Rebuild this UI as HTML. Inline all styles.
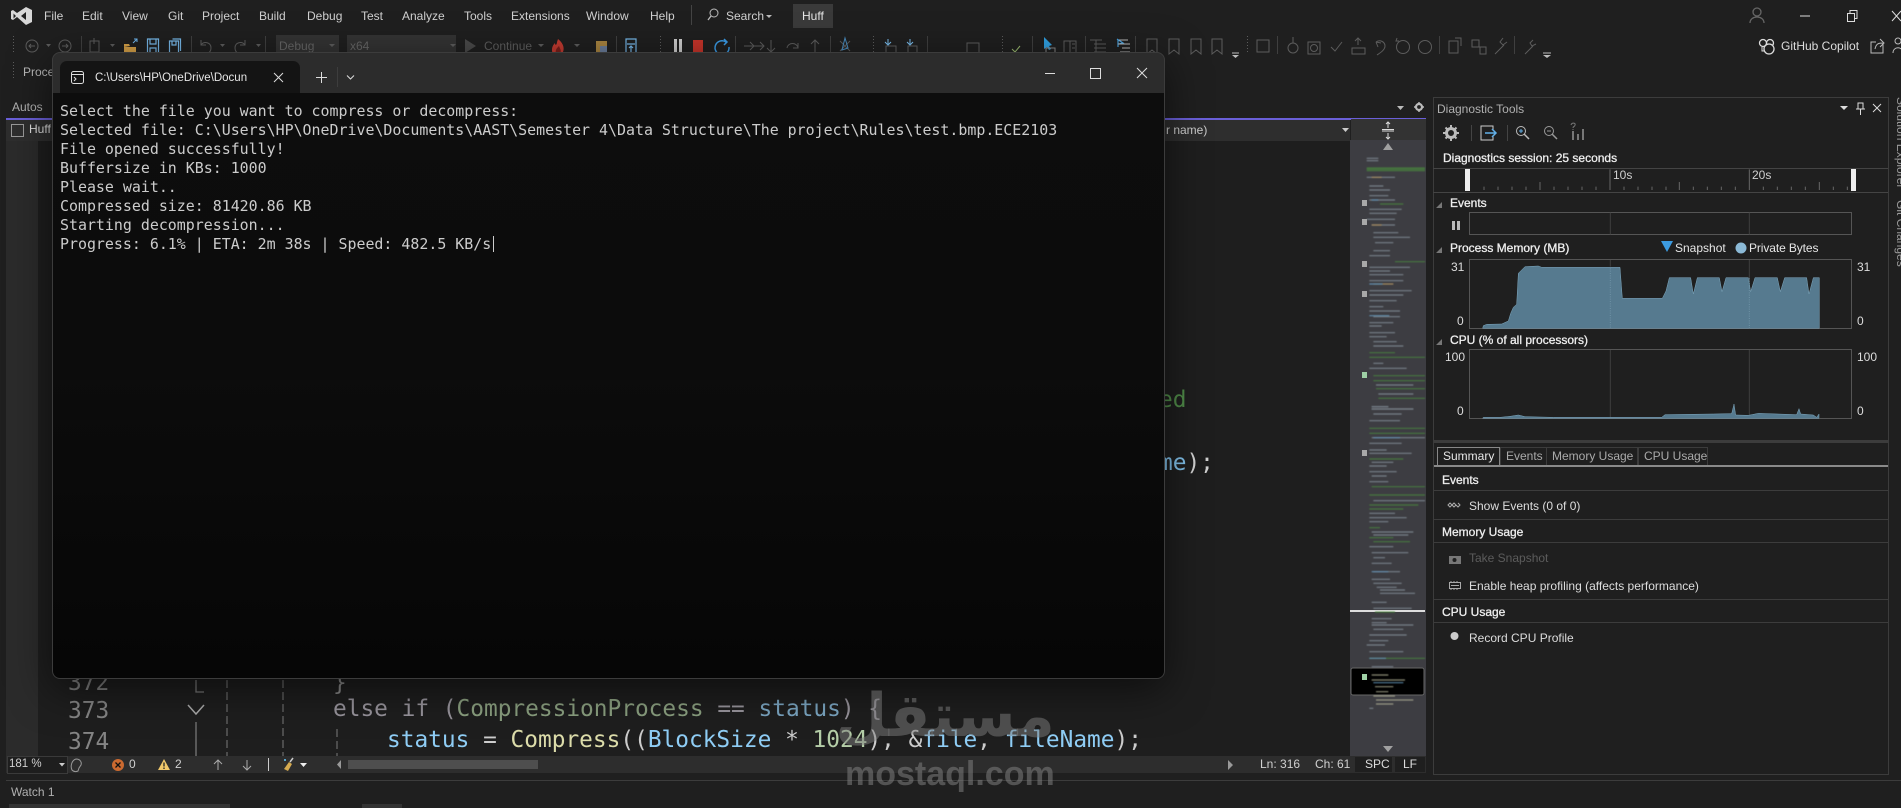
<!DOCTYPE html>
<html><head><meta charset="utf-8"><title>Huff</title>
<style>
html,body{margin:0;padding:0;background:#1f1f1f}
#p{position:relative;width:1901px;height:808px;overflow:hidden;background:#1f1f1f;font:12px/14px "Liberation Sans",sans-serif;color:#d0d0d0}
.t{position:absolute;white-space:pre;line-height:14px}
.b{position:absolute}
.b2{color:#eee;-webkit-text-stroke:.3px #eee}
.c{position:absolute;white-space:pre;font:22.8px/30px "DejaVu Sans Mono",monospace}
svg{position:absolute;left:0;top:0;overflow:visible}
.term{position:absolute;white-space:pre;left:60px;font:14.93px/19px "DejaVu Sans Mono",monospace;color:#ccc;font-weight:normal}
</style></head><body><div id="p">

<!-- left gutter + editor -->
<div class="b" style="left:6px;top:118px;width:32px;height:638px;background:#2b2b2b"></div>
<div class="b" style="left:38px;top:119px;width:1312px;height:637px;background:#1e1e1e"></div>
<div class="b" style="left:6px;top:118px;width:1420px;height:1.6px;background:#6a5fd8"></div>
<div class="b" style="left:6px;top:120px;width:1344px;height:21px;background:#2e2e2e"></div>
<div class="t" style="left:12px;top:100px;color:#b0b0b0">Autos</div>
<div class="t" style="left:29px;top:122px;color:#ddd">Huff</div>
<div class="b" style="left:11px;top:124px;width:11px;height:11px;border:1px solid #999"></div>
<div class="t" style="left:1166px;top:123px;color:#ccc">r name)</div>
<svg width="1901" height="808"><path d="M1342 128h7l-3.500 4z" fill="#ccc"/></svg>
<div class="b" style="left:1351px;top:119px;width:75px;height:21px;background:#333"></div>
<svg width="1901" height="808"><path d="M1382 129.500h12M1382 131h12M1388 122v6M1388 133v6M1386 124l2-2 2 2M1386 137l2 2 2-2" stroke="#ddd" fill="none"/>
<path d="M1397 106h7l-3.500 4z" fill="#bbb"/><circle cx="1419" cy="107" r="3" fill="none" stroke="#bbb" stroke-width="2.200"/><path d="M1419 102v2M1419 110v2M1414 107h2M1422 107h2" stroke="#bbb" stroke-width="1.500"/></svg>

<!-- code -->
<div class="c" style="left:1159px;top:385px;color:#4f8a48">ed</div>
<div class="c" style="left:1159px;top:448px;color:#d0d0d0"><span style="color:#80c0ea">me</span>);</div>
<div class="c" style="left:68px;top:668px;color:#7e7e7e">372</div>
<div class="c" style="left:333px;top:668px;color:#8a8a8a">}</div>
<div class="c" style="left:68px;top:696px;color:#858585">373</div>
<div class="c" style="left:333px;top:694px;color:#98949c">else if (<span style="color:#8ba080">CompressionProcess</span> == <span style="color:#7ba6c2">status</span>) {</div>
<div class="c" style="left:68px;top:727px;color:#858585">374</div>
<div class="c" style="left:387px;top:725px;color:#ccc"><span style="color:#8fcdf5">status</span> = <span style="color:#dcdcaa">Compress</span>((<span style="color:#8fcdf5">BlockSize</span> * <span style="color:#b5cea8">1024</span>), &amp;<span style="color:#8fcdf5">file</span>, <span style="color:#8fcdf5">fileName</span>);</div>
<svg width="1901" height="808">
<path d="M196 680v12h8" stroke="#777" fill="none" stroke-width="1.3"/>
<path d="M188 705l8 9 8-9" stroke="#aaa" fill="none" stroke-width="1.500"/>
<path d="M196 722v34" stroke="#777" stroke-width="1.300"/>
<path d="M227 680v76M283 680v76M337 729v27" stroke="#666" stroke-width="1.300" stroke-dasharray="8 4"/>
</svg>

<!-- minimap -->
<div class="b" style="left:1350px;top:140px;width:76px;height:616px;background:#3d3d42"></div>
<svg width="1901" height="808">
<path d="M1388 143l5 7h-10zM1388 752l5-6h-10z" fill="#a0a0a0"/>
<rect x="1350" y="610" width="75" height="2" fill="#ddd"/>
<rect x="1351" y="668" width="73" height="27" rx="2" fill="#000" stroke="#666"/>
<g style="filter:blur(.55px)" opacity=".75">
<g transform="translate(1340,110) scale(.33333)" stroke-width="3.500" fill="none">
<path stroke="#8a96a0" d="M80 145h35M80 152h35M80 202h85M88 228h42M88 240h62M88 257h57M88 270h77M88 298h97M88 310h82M80 328h85M95 345h70M100 368h75M100 382h110M105 398h55M100 422h50M88 437h62M88 472h122M88 483h62M88 494h102M88 512h102M88 542h127M88 555h102M88 572h82M88 590h42M88 603h92M100 620h80M88 638h72M88 648h37M88 668h77M88 680h52M100 695h70M100 708h90M100 760h30M88 775h112M108 825h112M115 852h105M95 890h50M95 897h125"/>
<path stroke="#4a8a3e" d="M80 174h175M80 178h175M80 182h175M120 282h70M165 455h90M88 728h77M88 742h167M100 797h155M100 812h155M108 836h147M115 865h140"/>
<path stroke="#c5a56a" d="M95 202h30M95 345h30M100 522h60"/>
<path stroke="#6ea8d0" d="M88 522h40M95 270h20M88 617h60"/>
</g>
<g transform="translate(1340,400) scale(.33333)" stroke-width="3.500" fill="none">
<path stroke="#8a96a0" d="M95 20h50M95 27h125M100 42h85M88 62h92M95 113h160M88 130h97M88 150h52M88 160h127M95 187h65M88 198h52M88 215h82M95 228h45M88 245h57M100 302h155M88 340h77M88 353h112M88 365h57M95 396h125M100 405h105M88 440h72M95 458h110M100 473h35M95 490h60M100 515h80M95 538h55M100 550h85M110 562h60M120 570h75M120 580h105M95 607h45M100 625h115M95 656h60M95 668h45M95 675h125M100 688h90M88 705h112M88 722h57M80 735h55M88 755h102M95 800h65M88 925h12"/>
<path stroke="#4a8a3e" d="M88 85h167M88 100h167M88 177h102M95 260h160M88 285h167M88 315h147M88 327h102M88 383h32M88 413h72M100 425h110M88 775h167M105 636h60"/>
<path stroke="#6ea8d0" d="M100 113h80M95 515h50M100 848h90M88 775h50"/>
<path stroke="#b7b79a" d="M95 825h50M95 840h100M105 860h55M108 875h37M100 888h65M108 900h112M108 912h52"/>
</g>
</g>
<path fill="#a8a8a8" d="M1362 200h5v6h-5zM1362 219h5v6h-5zM1362 261h5v6h-5zM1362 291h5v6h-5zM1362 450h5v6h-5z"/>
<path fill="#9fd0a6" d="M1362 372h5v6h-5zM1362 674h5v6h-5z"/>
</svg>

<!-- editor status bar -->
<div class="b" style="left:6px;top:756px;width:1420px;height:17px;background:#2d2d2d"></div>
<div class="b" style="left:7px;top:756px;width:59px;height:16px;background:#1e1e1e;border:1px solid #3a3a3a"></div>
<div class="t" style="left:9px;top:757px;font-size:11.500px">181 %</div>
<div class="t" style="left:129px;top:757px">0</div>
<div class="t" style="left:175px;top:757px">2</div>
<div class="b" style="left:348px;top:760px;width:190px;height:9px;background:#4e4e4e"></div>
<div class="t" style="left:1260px;top:757px">Ln: 316</div>
<div class="t" style="left:1315px;top:757px">Ch: 61</div>
<div class="b" style="left:1355px;top:757px;width:37px;height:15px;background:#1f1f1f"></div>
<div class="b" style="left:1395px;top:757px;width:30px;height:15px;background:#1f1f1f"></div>
<div class="t" style="left:1365px;top:757px;color:#ddd">SPC</div>
<div class="t" style="left:1403px;top:757px;color:#ddd">LF</div>
<svg width="1901" height="808">
<path d="M59 763h6l-3 3.500z" fill="#ccc"/>
<path d="M72 770c-2-4 0-10 4-11 4 0 6 3 5 6l-2 3-1 3c-2 1-4 1-6-1z" fill="none" stroke="#999"/>
<circle cx="118" cy="765" r="6" fill="#cc6a30"/><path d="M115.500 762.500l5 5M120.500 762.500l-5 5" stroke="#111" stroke-width="1.300"/>
<path d="M164 759l6 11h-12z" fill="#f0c86a"/><path d="M164 762.500v4M164 767.500v1.500" stroke="#222" stroke-width="1.300"/>
<path d="M218 770v-10M214 764l4-4 4 4M247 760v10M243 766l4 4 4-4" stroke="#aaa" fill="none"/>
<path d="M268.500 758v13" stroke="#ccc"/>
<path d="M288 771l-4-2 5-7 3 2z" fill="#d4aa50"/><path d="M290 762l3-4" stroke="#ccc" stroke-width="1.500"/><circle cx="285" cy="760" r="1" fill="#6cf"/>
<path d="M300 763h7l-3.500 4z" fill="#eee"/>
<path d="M341 760v9l-4-4.500zM1228 760v10l5-5z" fill="#999"/>
</svg>

<!-- diagnostic panel -->
<div class="b" style="left:1433px;top:97px;width:454px;height:676px;border:1px solid #3c3c3c;background:#1f1f1f"></div>
<div class="t" style="left:1437px;top:102px;color:#b0b0b0">Diagnostic Tools</div>
<div class="t b2" style="left:1443px;top:151px">Diagnostics session: 25 seconds</div>
<div class="b" style="left:1433px;top:168px;width:455px;height:23px;border-top:1px solid #444;border-bottom:1px solid #444"></div>
<div class="t" style="left:1613px;top:168px">10s</div>
<div class="t" style="left:1752px;top:168px">20s</div>
<div class="b" style="left:1465px;top:169px;width:5px;height:22px;background:#eee"></div>
<div class="b" style="left:1851px;top:169px;width:5px;height:22px;background:#eee"></div>
<div class="t b2" style="left:1450px;top:196px">Events</div>
<div class="b" style="left:1469px;top:212px;width:381px;height:21px;border:1px solid #555"></div>
<div class="t b2" style="left:1450px;top:241px">Process Memory (MB)</div>
<div class="t" style="left:1675px;top:241px;color:#e6e6e6">Snapshot</div>
<div class="t" style="left:1749px;top:241px;color:#e6e6e6;letter-spacing:-.1px">Private Bytes</div>
<div class="b" style="left:1469px;top:259px;width:381px;height:68px;border:1px solid #555"></div>
<div class="t" style="left:1451px;top:260px;color:#ddd">31</div>
<div class="t" style="left:1457px;top:314px;color:#ddd">0</div>
<div class="t" style="left:1857px;top:260px;color:#ddd">31</div>
<div class="t" style="left:1857px;top:314px;color:#ddd">0</div>
<div class="t b2" style="left:1450px;top:333px">CPU (% of all processors)</div>
<div class="b" style="left:1469px;top:349px;width:381px;height:68px;border:1px solid #555"></div>
<div class="t" style="left:1445px;top:350px;color:#ddd">100</div>
<div class="t" style="left:1457px;top:404px;color:#ddd">0</div>
<div class="t" style="left:1857px;top:350px;color:#ddd">100</div>
<div class="t" style="left:1857px;top:404px;color:#ddd">0</div>
<svg width="1901" height="808">
<g transform="translate(1420,90) scale(.33333)">
<path fill="#567a8f" stroke="#7fa9bf" stroke-width="1.500" d="M188 715L190 707 200 703 245 702 265 693 272 670 280 652 290 643 295 550 315 530 355 528 365 532 600 532 607 625 727 625 738 603 748 563 812 563 820 612 832 563 898 563 906 605 918 563 985 563 992 605 1005 563 1072 563 1081 605 1094 563 1160 563 1167 612 1180 563 1198 563 1198 715z"/>
<path stroke="#3d3d3d" stroke-width="3" d="M571 368v65M988 368v65M571 780v205M988 780v205"/>
<path stroke="#3d3d3d" stroke-width="3" d="M988 510v62M571 510v20"/>
<path stroke="#6f93a6" stroke-width="3" stroke-dasharray="3 4" d="M571 535v180M988 565v150"/>
<path fill="#567a8f" stroke="#7fa9bf" stroke-width="1.500" d="M188 985L190 982 240 982 270 979 295 975 315 980 400 982 725 982 735 974 880 972 935 971 942 942 947 975 985 976 1015 970 1130 974 1137 956 1142 972 1180 975 1190 982 1197 972 1197 985z"/>
<path stroke="#666" stroke-width="3" d="M570 238v62M988 238v62M360 276v24M778 276v24M1198 276v24"/>
<path stroke="#666" stroke-width="3" d="M192 290v10M234 290v10M276 290v10M318 290v10M402 290v10M444 290v10M486 290v10M528 290v10M612 290v10M654 290v10M696 290v10M738 290v10M820 290v10M862 290v10M904 290v10M946 290v10M1030 290v10M1072 290v10M1114 290v10M1156 290v10M1240 290v10M1282 290v10"/>
</g>
<path d="M1442 208h-6l6-6zM1442 253h-6l6-6zM1442 345h-6l6-6z" fill="#777"/>
<path d="M1452 221h3v9h-3zM1457 221h3v9h-3z" fill="#bbb"/>
<path d="M1661 241h12l-6 11z" fill="#3c9be0"/><circle cx="1741" cy="248" r="5.500" fill="#8bb9d6"/>
<!-- title icons -->
<path d="M1840 106h8l-4 4z" fill="#ddd"/><path d="M1858 103h5v6h-5zM1856 109h9M1860.500 109v6M1873 104l8 8M1881 104l-8 8" stroke="#ddd" fill="none"/>
<circle cx="1451" cy="133" r="4.500" fill="none" stroke="#bbb" stroke-width="3"/><path d="M1451 125v3M1451 138v3M1443 133h3M1456 133h3M1445.500 127.500l2 2M1454.500 136.500l2 2M1456.500 127.500l-2 2M1447.500 136.500l-2 2" stroke="#bbb" stroke-width="2"/>
<path d="M1471.500 125v16M1507.500 125v16" stroke="#444"/>
<path d="M1493 130v-4h-12v14h12v-4" stroke="#ccc" fill="none"/><path d="M1485 133h11M1492 129l4 4-4 4" stroke="#62b0e8" fill="none" stroke-width="1.500"/>
<circle cx="1521" cy="131" r="4.500" fill="none" stroke="#bbb"/><path d="M1524 134l5 5" stroke="#bbb" stroke-width="1.500"/><path d="M1519 131h4M1521 129v4" stroke="#62b0e8"/>
<circle cx="1549" cy="131" r="4.500" fill="none" stroke="#999"/><path d="M1552 134l5 5" stroke="#999" stroke-width="1.500"/><path d="M1547 131h4" stroke="#999"/>
<path d="M1573 131v9M1578 134v6M1583 129v11" stroke="#777" stroke-width="2"/><path d="M1571 125c1-3 5-2 4 0 0 2-2 1-2 3M1573 129v1" stroke="#777" fill="none"/>
<!-- summary icons -->
<path d="M1450 503l2 2-2 2-2-2zM1454 503l2 2-2 2-2-2zM1458 503l2 2-2 2-2-2" fill="none" stroke="#aaa"/>
<path d="M1449 556h12v8h-12z" fill="#777"/><circle cx="1454.500" cy="560" r="2" fill="#1f1f1f"/>
<path d="M1449.500 582.500h11v6h-11zM1451 585.500h8" fill="none" stroke="#aaa"/><path d="M1451 581v1M1454 581v1M1457 581v1M1451 589v1M1454 589v1M1457 589v1" stroke="#aaa"/>
<circle cx="1454.500" cy="636" r="4" fill="#ccc"/>
</svg>
<div class="b" style="left:1434px;top:440px;width:454px;height:3px;background:#3c3c3c"></div>
<div class="b" style="left:1437px;top:447px;width:61px;height:17px;border:1px solid #888;border-bottom:0"></div>
<div class="b" style="left:1500px;top:447px;width:45px;height:17px;border:1px solid #3c3c3c;border-bottom:0"></div>
<div class="b" style="left:1546px;top:447px;width:90px;height:17px;border:1px solid #3c3c3c;border-bottom:0"></div>
<div class="b" style="left:1638px;top:447px;width:68px;height:17px;border:1px solid #3c3c3c;border-bottom:0"></div>
<div class="b" style="left:1434px;top:465px;width:454px;height:2px;background:#8a8a8a"></div>
<div class="t" style="left:1443px;top:449px;color:#e6e6e6">Summary</div>
<div class="t" style="left:1506px;top:449px;color:#aaa">Events</div>
<div class="t" style="left:1552px;top:449px;color:#aaa">Memory Usage</div>
<div class="t" style="left:1644px;top:449px;color:#aaa">CPU Usage</div>
<div class="t b2" style="left:1442px;top:473px">Events</div>
<div class="t" style="left:1469px;top:499px;color:#ddd">Show Events (0 of 0)</div>
<div class="t b2" style="left:1442px;top:525px">Memory Usage</div>
<div class="t" style="left:1469px;top:551px;color:#5c5c5c">Take Snapshot</div>
<div class="t" style="left:1469px;top:579px;color:#ddd">Enable heap profiling (affects performance)</div>
<div class="t b2" style="left:1442px;top:605px">CPU Usage</div>
<div class="t" style="left:1469px;top:631px;color:#ddd">Record CPU Profile</div>
<div class="b" style="left:1434px;top:490px;width:454px;height:1px;background:#3c3c3c"></div>
<div class="b" style="left:1434px;top:519px;width:454px;height:1px;background:#3c3c3c"></div>
<div class="b" style="left:1434px;top:542px;width:454px;height:1px;background:#3c3c3c"></div>
<div class="b" style="left:1434px;top:599px;width:454px;height:1px;background:#3c3c3c"></div>
<div class="b" style="left:1434px;top:622px;width:454px;height:1px;background:#3c3c3c"></div>

<!-- side tabs -->
<div class="t" style="left:1908px;top:97px;transform:rotate(90deg);transform-origin:0 0;color:#9a9a9a">Solution Explorer</div>
<div class="t" style="left:1908px;top:200px;transform:rotate(90deg);transform-origin:0 0;color:#9a9a9a">Git Changes</div>

<!-- watch -->
<div class="b" style="left:6px;top:780px;width:1895px;height:28px;border-top:1px solid #3c3c3c"></div>
<div class="t" style="left:11px;top:785px;color:#b0b0b0">Watch 1</div>
<div class="b" style="left:9px;top:804px;width:221px;height:4px;background:#333"></div>
<div class="b" style="left:362px;top:804px;width:40px;height:4px;background:#333"></div>

<!-- top menu -->
<svg width="1901" height="808"><path fill-rule="evenodd" fill="#d8d8d8" d="M26 7l6 3v12l-6 3-9-8-4 3-2-1v-8l2-1 4 3zM26 12l-5 4 5 4zM13.500 13.500v5l2.500-2.500z"/></svg>
<div class="t" style="left:44px;top:9px">File</div>
<div class="t" style="left:82px;top:9px">Edit</div>
<div class="t" style="left:122px;top:9px">View</div>
<div class="t" style="left:168px;top:9px">Git</div>
<div class="t" style="left:202px;top:9px">Project</div>
<div class="t" style="left:259px;top:9px">Build</div>
<div class="t" style="left:307px;top:9px">Debug</div>
<div class="t" style="left:361px;top:9px">Test</div>
<div class="t" style="left:402px;top:9px">Analyze</div>
<div class="t" style="left:464px;top:9px">Tools</div>
<div class="t" style="left:511px;top:9px">Extensions</div>
<div class="t" style="left:586px;top:9px">Window</div>
<div class="t" style="left:650px;top:9px">Help</div>
<div class="t" style="left:726px;top:9px">Search</div>
<div class="b" style="left:793px;top:4px;width:40px;height:24px;background:#3a3a3a"></div>
<div class="t" style="left:802px;top:9px;color:#e6e6e6">Huff</div>
<div class="t" style="left:484px;top:39px;color:#5e5e5e">Continue</div>
<div class="b" style="left:276px;top:35px;width:63px;height:19px;background:#333"></div>
<div class="b" style="left:347px;top:35px;width:109px;height:19px;background:#333"></div>
<div class="t" style="left:279px;top:39px;color:#666">Debug</div>
<div class="t" style="left:350px;top:39px;color:#666">x64</div>
<div class="t" style="left:23px;top:65px;color:#b8b8b8">Proce</div>
<div class="t" style="left:1781px;top:39px;color:#ddd">GitHub Copilot</div>
<svg width="1901" height="808">
<path d="M691.500 5v20" stroke="#444"/>
<circle cx="714" cy="13" r="4" fill="none" stroke="#bbb"/><path d="M711 16l-3 4" stroke="#bbb" stroke-width="1.300"/>
<path d="M766 15h6l-3 3z" fill="#bbb"/>
<!-- window buttons -->
<circle cx="1757" cy="12" r="4" fill="none" stroke="#666" stroke-width="1.300"/><path d="M1750 23c0-8 14-8 14 0" fill="none" stroke="#666" stroke-width="1.300"/>
<path d="M1800 16h10" stroke="#ddd"/><path d="M1847.500 13.500h7v8h-7zM1850 13v-2.500h7v8h-2.500" stroke="#ddd" fill="none"/><path d="M1892 11l9 10M1901 11l-9 10" stroke="#ddd"/>
<!-- toolbar -->
<g stroke="#5c5c5c" fill="none">
<path stroke-dasharray="1 2" d="M13.500 36v18M660.500 36v18M873.500 36v18M1002.500 36v18M1247.500 36v18M13.500 62v18"/>
<path stroke="#3f3f3f" d="M81.500 36v18M191.500 36v18M265.500 36v18M616.500 36v18M735.500 36v18M830.500 36v18M927.500 36v18M1032.500 36v18M1085.500 36v18M1135.500 36v18M1277.500 36v18M1439.500 36v18M1514.500 36v18"/>
<circle cx="32" cy="46" r="6"/><path d="M35 46h-6M31 44l-2 2 2 2"/><circle cx="65" cy="46" r="6"/><path d="M62 46h6M66 44l2 2-2 2"/>
<path d="M90 41h9v11h-9zM94 38v6M91 41h6"/>
<path d="M201 40v5h5M201 45c3-4 10-3 10 3 0 3-2 5-4 6M245 40v5h-5M245 45c-3-4-10-3-10 3 0 3 2 5 4 6"/>
<path d="M752 46h12M760 42l4 4-4 4M744 46h10M750 42l4 4-4 4M771 40v12M767 48l4 4 4-4M787 48c1-6 10-6 11 0M798 43v5h-5M815 52v-12M811 44l4-4 4 4"/>
<path d="M840 41l10 10M850 41l-10 10"/>
<path d="M886 46h10v9h-10zM908 46h9v9h-9zM967 43h12v11h-12zM1090 40h12M1096 40v14M1094 44h12M1094 48h12M1094 52h12"/>
<path d="M1064 41h12v13h-12zM1070 41v13M1072 44h3M1072 48h3"/>
<path d="M1147 39h10v15l-5-4-5 4zM1169 39h10v15l-5-4-5 4zM1191 39h10v15l-5-4-5 4zM1212 39h10v15l-5-4-5 4zM1257 40h12v12h-12z"/>
<circle cx="1293" cy="48" r="5"/><path d="M1293 37v6"/><path d="M1308 42h12v12h-12z"/><circle cx="1314" cy="48" r="3.500"/><path d="M1331 47l4 4 7-9M1352 48h13v6h-13zM1358 45v-7M1355 41l3-3 3 3"/>
<path d="M1376 42c4-3 9 0 9 4s-5 7-8 9M1376 42l5 1M1376 42l2 5"/><circle cx="1403" cy="47" r="6.500"/><path d="M1399 41l-3 0 1-3"/><circle cx="1425" cy="47" r="6.500"/>
<path d="M1449 41h9v12h-9zM1455 38h6v8M1472 40h7v7h-7zM1480 47h6v7h-6zM1495 54l9-9M1503 38l-3 4 3 3 4-3M1525 54l8-8M1533 40l-3 3 2 3 4-2"/>
</g>
<g fill="none" stroke="#76b7e8" stroke-width="1.200">
<path d="M147.500 39h11v14h-11zM150 39v5h6v-5M150 53v-5h6v5M169.500 41h9v12h-9zM172 41v4h4v-4M172.500 39h8v12"/>
<path d="M626 39h10v14h-10zM627 44h8M629 48l2-2 2 2M631 46v6"/>
<path d="M726 42a7 7 0 1 0 3 5M724 39l3 3-3 3" stroke="#3a9be6" stroke-width="1.500"/>
<path d="M1117 39l6 4-4 1M1118 40v7" stroke="#4aa3e0"/>
</g>
<path d="M124 47h12v7h-12zM124 47v-3h5l1 2" fill="#d7a248"/><path d="M133 43l4-4M134 39h3v3" stroke="#70b8f0" fill="none"/>
<path d="M465 39l11 7-11 7z" fill="#4a4a4a"/>
<path d="M538 44h6l-3 3zM46 44h5l-2.500 3zM110 44h5l-2.500 3zM220 44h5l-2.500 3zM256 44h5l-2.500 3zM329 44h6l-3 3zM450 44h6l-3 3zM574 44h6l-3 3z" fill="#5c5c5c"/>
<path d="M553 54c-2-4-1-8 2-11 0 3 2 2 2-1l1-3c4 3 7 8 5 13-1 3-7 4-10 2z" fill="#c03a30"/><path d="M556 53c-1-3 1-5 3-7 1 3 3 5 1 7z" fill="#7a1f1a"/>
<path d="M596 41h11v13h-11z" fill="#a78340"/><path d="M600 46h7v8h-7z" fill="#6a7d9a"/>
<rect x="674" y="39" width="3" height="13" fill="#ccc"/><rect x="679" y="39" width="3" height="13" fill="#ccc"/>
<rect x="693" y="40" width="10" height="12" fill="#c5342a"/>
<path d="M645 53h8" stroke="#aaa"/><path d="M646 55h6l-3 2z" fill="#aaa"/>
<path d="M988 53h7M860 53h7M1232 53h7M1543 53h8" stroke="#bbb"/><path d="M988 55h7l-3.500 3zM860 55h7l-3.500 3zM1232 55h7l-3.500 3zM1543 55h8l-4 3z" fill="#bbb"/>
<path d="M845 38l-3 12 6-2z" fill="none" stroke="#4a8ec2"/><path d="M888 39v5M885 42l3 3 3-3M910 39v5M907 42l3 3 3-3" stroke="#7cc0f0" fill="none"/>
<path d="M1044 37v12l3-2 2 3 2-1-2-3 3-1z" fill="#2f9fe0"/><path d="M1046 48h9v6h-9z" fill="none" stroke="#888"/>
<path d="M1119 40h9M1118 44h12M1122 48h8M1120 52h10" stroke="#bbb"/>
<path d="M1012 49l3 3 5-6" stroke="#9aba70" fill="none"/>
<!-- copilot, share -->
<circle cx="1763" cy="43" r="3.500" fill="none" stroke="#ddd" stroke-width="1.300"/><circle cx="1770" cy="43" r="3.500" fill="none" stroke="#ddd" stroke-width="1.300"/><circle cx="1769" cy="49" r="5" fill="#1f1f1f" stroke="#ddd" stroke-width="1.300"/><path d="M1762 47v4h3" stroke="#ddd" fill="none"/>
<path d="M1883 44v9h-12v-11h5M1875 49c1-5 3-6 8-6M1880 39l4 4-4 4" stroke="#bbb" fill="none"/>
<circle cx="1898" cy="41" r="3" fill="none" stroke="#bbb"/><path d="M1893 53c0-7 10-7 10 0" stroke="#bbb" fill="none"/>
</svg>

<!-- terminal -->
<div class="b" style="left:52px;top:52px;width:1113px;height:627px;border-radius:8px;box-shadow:0 10px 42px rgba(0,0,0,.55);background:#2c2c2c;overflow:hidden">
<div class="b" style="left:0;top:41px;width:1113px;height:586px;background:linear-gradient(#0d0d0d,#0c0c0c 45%,#060606)"></div>
<div class="b" style="left:8px;top:9px;width:240px;height:32px;border-radius:7px 7px 0 0;background:#141414"></div>
</div>
<div class="b" style="left:52px;top:52px;width:1111px;height:625px;border-radius:8px;border:1px solid #3c3c3c"></div>
<div class="t" style="left:95px;top:71px;color:#e6e6e6;font-size:11.500px">C:\Users\HP\OneDrive\Docun</div>
<svg width="1901" height="808">
<rect x="71.500" y="71.500" width="12" height="12" rx="2" fill="none" stroke="#ddd"/><path d="M71.500 74.500h12M74 77l2 2-2 2" stroke="#ddd" fill="none"/>
<path d="M274 73l9 9M283 73l-9 9M316 77.500h11M321.500 72v11M347 75.500l3.500 3.500 3.500-3.500M1045 73.500h10M1090.500 68.500h10v10h-10zM1137 68l10 10M1147 68l-10 10" stroke="#ddd" fill="none"/>
<path d="M337.500 67v20" stroke="#3d3d3d"/>
<path d="M493.500 236v16" stroke="#ccc"/>
</svg>
<div class="term" style="top:102px">Select the file you want to compress or decompress:</div>
<div class="term" style="top:121px">Selected file: C:\Users\HP\OneDrive\Documents\AAST\Semester 4\Data Structure\The project\Rules\test.bmp.ECE2103</div>
<div class="term" style="top:140px">File opened successfully!</div>
<div class="term" style="top:159px">Buffersize in KBs: 1000</div>
<div class="term" style="top:178px">Please wait..</div>
<div class="term" style="top:197px">Compressed size: 81420.86 KB</div>
<div class="term" style="top:216px">Starting decompression...</div>
<div class="term" style="top:235px">Progress: 6.1% | ETA: 2m 38s | Speed: 482.5 KB/s</div>

<!-- watermark -->
<div class="t" style="left:825px;top:676px;width:240px;text-align:center;font:bold 60px/80px 'DejaVu Sans',sans-serif;color:rgba(125,125,125,.5)">مستقل</div>
<div class="t" style="left:845px;top:752px;font:bold 34px/44px 'Liberation Sans',sans-serif;color:rgba(125,125,125,.55)">mostaql.com</div>
</div></body></html>
